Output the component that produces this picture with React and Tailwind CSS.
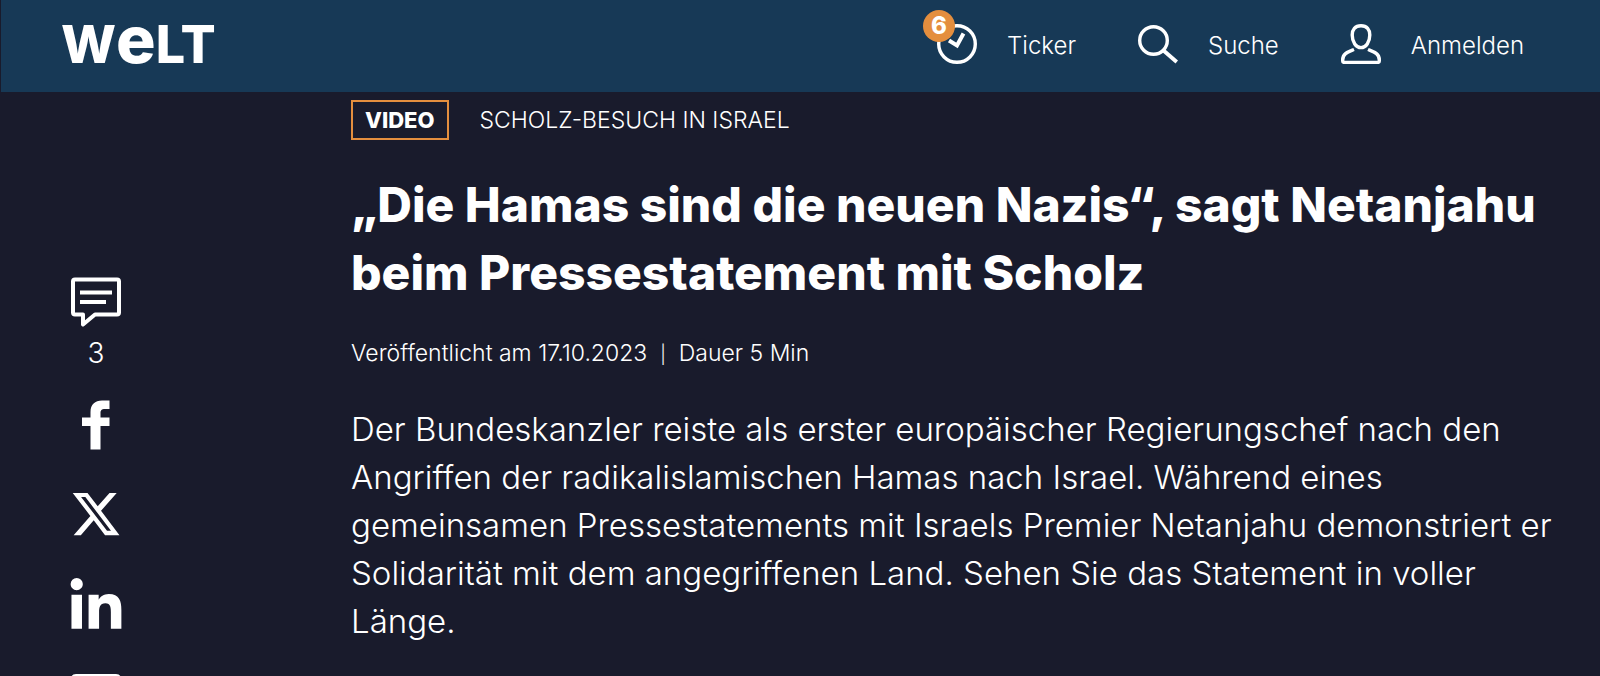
import { FaLinkedinIn, FaXTwitter } from "react-icons/fa6";

const navItems = [
    { label: "Ticker", icon: ClockIcon, badge: 6 },
    { label: "Suche", icon: SearchIcon },
    { label: "Anmelden", icon: UserIcon },
];

export default function App() {
    return (
        <div className="h-screen overflow-hidden bg-[#191b2c] font-['Inter',sans-serif] text-white">
            <Header />
            <div className="flex">
                <ShareBar />
                <Article />
            </div>
        </div>
    );
}

function Header() {
    return (
        <header className="ml-px flex h-[92px] items-center justify-between bg-[#173956] pr-[76px] pl-[60px]">
            <a href="#start" aria-label="WELT Startseite">
                <Logo />
            </a>
            <nav className="flex items-center gap-[62px] pb-1">
                {navItems.map((item) => (
                    <NavItem key={item.label} item={item} />
                ))}
            </nav>
        </header>
    );
}

function NavItem({ item }) {
    const Icon = item.icon;

    return (
        <a href={`#${item.label.toLowerCase()}`} className="flex items-center gap-[30px] text-2xl font-light">
            <span className="relative">
                <Icon />
                {item.badge && (
                    <span className="absolute -top-3.5 -left-3.5 flex size-8 items-center justify-center rounded-full bg-[#e48e3e] text-2xl font-extrabold">
                        {item.badge}
                    </span>
                )}
            </span>
            <span className="pt-1">{item.label}</span>
        </a>
    );
}

function ShareBar() {
    return (
        <aside className="flex w-[192px] shrink-0 flex-col items-center pt-[185px]">
            <a href="#kommentare" className="flex flex-col items-center gap-2 text-[28px] leading-9 font-light">
                <CommentIcon />
                3
            </a>
            <a href="#facebook" aria-label="Auf Facebook teilen" className="mt-[29px]">
                <FacebookIcon />
            </a>
            <a href="#x" aria-label="Auf X teilen" className="mt-[38px]">
                <FaXTwitter className="size-[52px]" />
            </a>
            <a href="#linkedin" aria-label="Auf LinkedIn teilen" className="mt-[38px]">
                <FaLinkedinIn className="size-[58px]" />
            </a>
            <a href="#mail" aria-label="Per E-Mail teilen" className="mt-[38px]">
                <MailIcon />
            </a>
        </aside>
    );
}

function Article() {
    return (
        <article className="min-w-0 flex-1 pt-2 pl-[159px]">
            <div className="flex items-center gap-[31px] text-[22px]">
                <span className="flex h-10 items-center border-2 border-[#e48e3e] px-3 font-extrabold">VIDEO</span>
                <span className="text-[23px] font-light">SCHOLZ-BESUCH IN ISRAEL</span>
            </div>
            <h1 className="mt-[31px] text-[48px] leading-[68px] font-extrabold">
                „Die Hamas sind die neuen Nazis“, sagt Netanjahu
                <br />
                beim Pressestatement mit Scholz
            </h1>
            <p className="mt-[30px] text-[23px] leading-8 font-light">
                Veröffentlicht am 17.10.2023 &nbsp;<span className="text-lg">|</span>&nbsp; Dauer 5 Min
            </p>
            <p className="mt-9 text-[33px] leading-[48px] font-light">
                Der Bundeskanzler reiste als erster europäischer Regierungschef nach den
                <br />
                Angriffen der radikalislamischen Hamas nach Israel. Während eines
                <br />
                gemeinsamen Pressestatements mit Israels Premier Netanjahu demonstriert er
                <br />
                Solidarität mit dem angegriffenen Land. Sehen Sie das Statement in voller
                <br />
                Länge.
            </p>
        </article>
    );
}

function Logo() {
    return (
        <svg width="154" height="92" viewBox="0 0 154 92" fill="currentColor" fontFamily="Inter, sans-serif" fontWeight="800">
            <text x="0" y="63" fontSize="52">
                W<tspan fontSize="66">e</tspan>LT
            </text>
        </svg>
    );
}

function ClockIcon() {
    return (
        <svg width="40" height="40" viewBox="0 0 40 40" fill="none" stroke="currentColor">
            <circle cx="20" cy="20" r="18.3" strokeWidth="3.4" />
            <path d="M12 16.5 20 21.5 26.5 9.5" strokeWidth="4" />
        </svg>
    );
}

function SearchIcon() {
    return (
        <svg width="40" height="40" viewBox="0 0 40 40" fill="none" stroke="currentColor">
            <circle cx="15.5" cy="16.5" r="13.8" strokeWidth="3.4" />
            <path d="M25.5 26.5 38.8 38" strokeWidth="4" />
        </svg>
    );
}

function UserIcon() {
    return (
        <svg width="40" height="40" viewBox="0 0 40 40" fill="none" stroke="currentColor" strokeWidth="3.4">
            <path d="M20 1.7C14 1.7 11.2 5.5 11.2 11c0 7 3.8 12.6 8.8 12.6S28.8 18 28.8 11c0-5.500-2.800-9.300-8.800-9.300Z" />
            <path d="M13 25.500C7 28 1.700 29.500 1.700 36v1q0 1.400 1.500 1.400h33.600q1.500 0 1.500-1.400v-1C38.300 29.500 33 28 27 25.500" />
        </svg>
    );
}

function CommentIcon() {
    return (
        <svg width="50" height="50" viewBox="0 0 50 50" fill="none" stroke="currentColor" strokeWidth="4" strokeLinejoin="round">
            <path d="M4 2.500h42q2 0 2 2v31q0 2-2 2H24L12 47.500V37.500H4q-2 0-2-2v-31q0-2 2-2Z" />
            <path d="M9 15.500h32M9 25h26" />
        </svg>
    );
}

function FacebookIcon() {
    return (
        <svg width="28" height="50" viewBox="0 0 28 50" fill="currentColor">
            <path d="M8.500 49.500V26H0v-8.500h8.500V12C8.500 4.500 13 .5 20 .5h7.500V9H23c-3.500 0-4.500 1.500-4.500 4v4.500h9V26h-9v23.500Z" />
        </svg>
    );
}

function MailIcon() {
    return (
        <svg width="50" height="36" viewBox="0 0 50 36" fill="none" stroke="currentColor" strokeWidth="4" strokeLinejoin="round">
            <path d="M5 2h40q3 0 3 3v26q0 3-3 3H5q-3 0-3-3V5q0-3 3-3Z" />
            <path d="m4 5 21 17L46 5" />
        </svg>
    );
}
